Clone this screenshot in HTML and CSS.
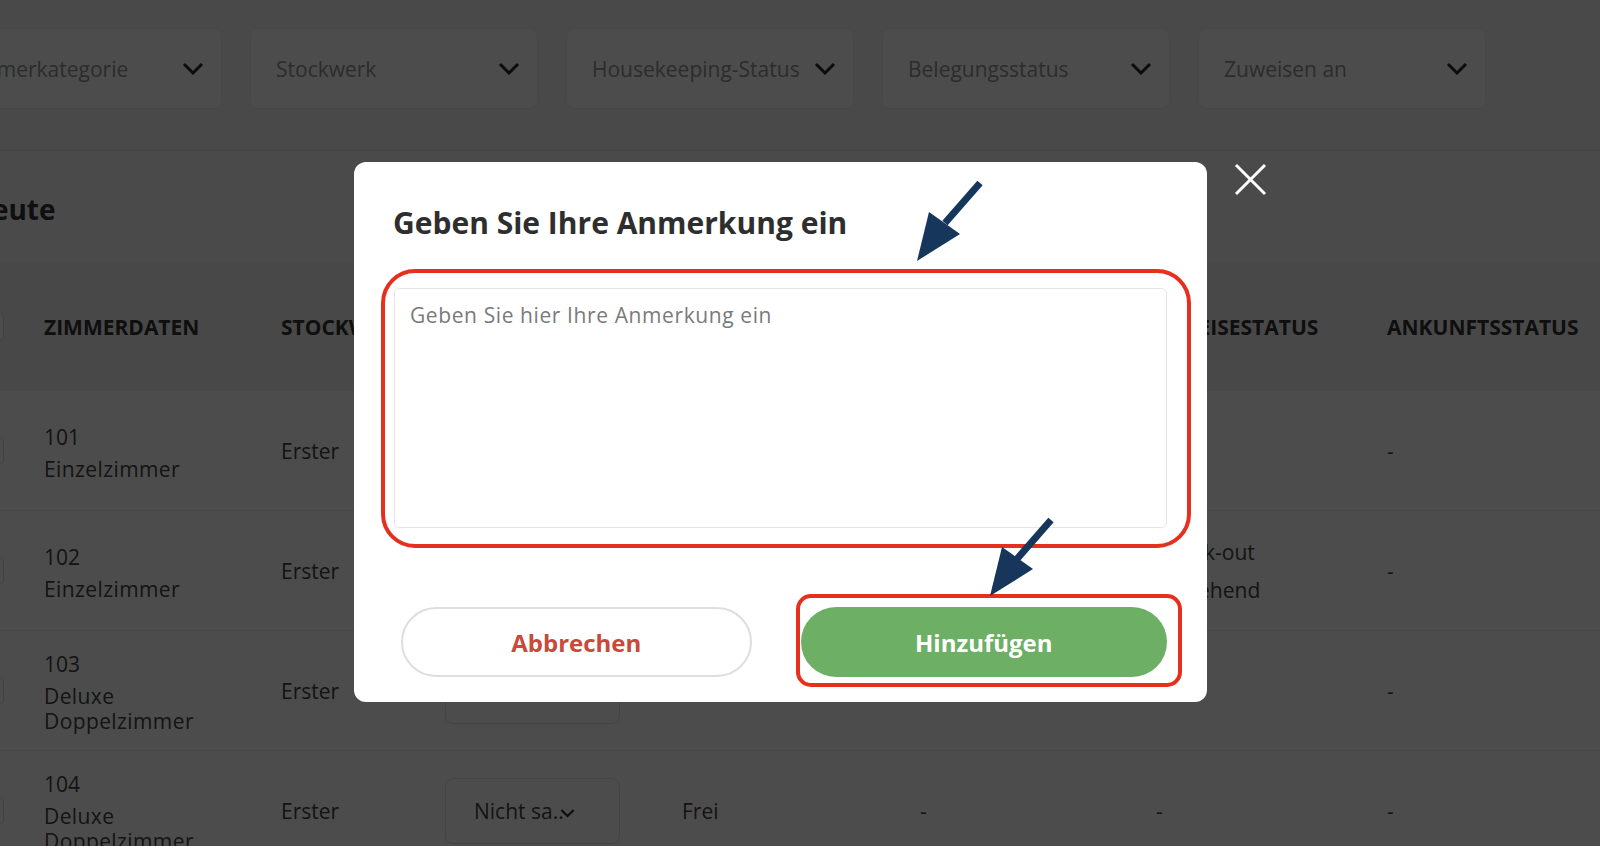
FILE: index.html
```html
<!DOCTYPE html>
<html lang="de">
<head>
<meta charset="utf-8">
<title>Anmerkung hinzufügen</title>
<link rel="stylesheet" href="styles.css">
</head>
<body>
<div class="page">
  <div class="filters">
    <div class="filter"><span class="filter-label">Zimmerkategorie</span><svg class="chev" viewBox="0 0 22 13"><polyline points="2,2 11,11 20,2"/></svg></div>
    <div class="filter"><span class="filter-label">Stockwerk</span><svg class="chev" viewBox="0 0 22 13"><polyline points="2,2 11,11 20,2"/></svg></div>
    <div class="filter"><span class="filter-label">Housekeeping-Status</span><svg class="chev" viewBox="0 0 22 13"><polyline points="2,2 11,11 20,2"/></svg></div>
    <div class="filter"><span class="filter-label">Belegungsstatus</span><svg class="chev" viewBox="0 0 22 13"><polyline points="2,2 11,11 20,2"/></svg></div>
    <div class="filter"><span class="filter-label">Zuweisen an</span><svg class="chev" viewBox="0 0 22 13"><polyline points="2,2 11,11 20,2"/></svg></div>
  </div>

  <div class="section-title"><h2>Zimmer für heute</h2></div>

  <div class="table">
    <div class="row head">
      <div class="cell"><span class="checkbox"></span></div>
      <div class="cell">ZIMMERDATEN</div>
      <div class="cell">STOCKWERK</div>
      <div class="cell">HOUSEKEEPING</div>
      <div class="cell">BELEGUNG</div>
      <div class="cell">ZUGEWIESEN</div>
      <div class="cell">ABREISESTATUS</div>
      <div class="cell">ANKUNFTSSTATUS</div>
    </div>

    <div class="row body">
      <div class="cell"><span class="checkbox"></span></div>
      <div class="cell room"><div class="num">101</div><div class="type">Einzelzimmer</div></div>
      <div class="cell">Erster</div>
      <div class="cell"><div class="select"><span>Sauber</span><svg class="chev small" viewBox="0 0 22 13"><polyline points="2,2 11,11 20,2"/></svg></div></div>
      <div class="cell">Frei</div>
      <div class="cell">-</div>
      <div class="cell">-</div>
      <div class="cell">-</div>
    </div>

    <div class="row body">
      <div class="cell"><span class="checkbox"></span></div>
      <div class="cell room"><div class="num">102</div><div class="type">Einzelzimmer</div></div>
      <div class="cell">Erster</div>
      <div class="cell"><div class="select"><span>Sauber</span><svg class="chev small" viewBox="0 0 22 13"><polyline points="2,2 11,11 20,2"/></svg></div></div>
      <div class="cell">Belegt</div>
      <div class="cell">-</div>
      <div class="cell status">Check-out<br>anstehend</div>
      <div class="cell">-</div>
    </div>

    <div class="row body">
      <div class="cell"><span class="checkbox"></span></div>
      <div class="cell room"><div class="num">103</div><div class="type">Deluxe Doppelzimmer</div></div>
      <div class="cell">Erster</div>
      <div class="cell"><div class="select"><span>Sauber</span><svg class="chev small" viewBox="0 0 22 13"><polyline points="2,2 11,11 20,2"/></svg></div></div>
      <div class="cell">Frei</div>
      <div class="cell">-</div>
      <div class="cell">-</div>
      <div class="cell">-</div>
    </div>

    <div class="row body">
      <div class="cell"><span class="checkbox"></span></div>
      <div class="cell room"><div class="num">104</div><div class="type">Deluxe Doppelzimmer</div></div>
      <div class="cell">Erster</div>
      <div class="cell"><div class="select"><span>Nicht sa..</span><svg class="chev small" viewBox="0 0 22 13"><polyline points="2,2 11,11 20,2"/></svg></div></div>
      <div class="cell">Frei</div>
      <div class="cell">-</div>
      <div class="cell">-</div>
      <div class="cell">-</div>
    </div>
  </div>
</div>

<div class="overlay"></div>

<button class="close" aria-label="Schließen">
  <svg viewBox="0 0 33 33"><line x1="2" y1="2" x2="31" y2="31"/><line x1="31" y1="2" x2="2" y2="31"/></svg>
</button>

<div class="modal">
  <h1 class="modal-title">Geben Sie Ihre Anmerkung ein</h1>
  <textarea class="note" placeholder="Geben Sie hier Ihre Anmerkung ein"></textarea>
  <div class="actions">
    <button class="btn btn-cancel">Abbrechen</button>
    <button class="btn btn-add">Hinzufügen</button>
  </div>
</div>

<svg class="annotations" viewBox="0 0 1600 846">
  <rect class="mark" x="383" y="271" width="806" height="275" rx="32"/>
  <rect class="mark" x="798" y="596" width="382" height="89" rx="13"/>
  <line class="shaft" x1="980" y1="183" x2="945" y2="223"/>
  <polygon class="head" points="917,261 929,212 960,234"/>
  <line class="shaft" x1="1051" y1="520" x2="1017" y2="559"/>
  <polygon class="head" points="990,596 1002,547 1033,569"/>
</svg>
</body>
</html>
```

FILE: styles.css
```css
* { box-sizing: border-box; }

body {
  margin: 0;
  width: 1600px;
  height: 846px;
  overflow: hidden;
  position: relative;
  background: #ffffff;
  font-family: "Open Sans", "Liberation Sans", sans-serif;
  color: #444;
}

.page {
  margin-left: -100px;
  width: 1700px;
}

/* filter bar */
.filters {
  display: flex;
  align-items: flex-start;
  gap: 28px;
  height: 151px;
  padding: 28px 0 0 34px;
  background: #f4f5f8;
  border-bottom: 1px solid #e2e3e6;
}

.filter {
  flex: 0 0 288px;
  height: 81px;
  display: flex;
  align-items: center;
  justify-content: space-between;
  padding: 0 17px 0 25px;
  background: #ffffff;
  border: 1px solid #eceef1;
  border-radius: 8px;
  font-size: 21px;
  color: #959595;
  white-space: nowrap;
}

.filter-label { overflow: hidden; }

.chev {
  flex: 0 0 22px;
  width: 22px;
  height: 13px;
  fill: none;
  stroke: #2a2a2a;
  stroke-width: 3;
}

.chev.small {
  flex: 0 0 15px;
  width: 15px;
  height: 10px;
  margin-left: -4px;
  margin-top: 5px;
}

/* title */
.section-title {
  height: 112px;
  display: flex;
  align-items: center;
  padding-top: 4px;
  background: #f8f9fb;
}

.section-title h2 {
  margin: 0 0 0 -92px;
  font-size: 28px;
  font-weight: 700;
  color: #333;
  white-space: nowrap;
}

/* table */
.row {
  display: grid;
  grid-template-columns: 68px 237px 164px 237px 238px 236px 231px 1fr;
  align-items: center;
  padding-left: 76px;
}

.row.head {
  height: 128px;
  background: #f1f2f4;
  font-size: 21px;
  font-weight: 700;
  color: #333;
  white-space: nowrap;
}

.row.body {
  height: 120px;
  background: #ffffff;
  border-bottom: 1px solid #ececec;
  font-size: 21px;
  color: #444;
}

.checkbox {
  display: block;
  width: 28px;
  height: 28px;
  background: #fff;
  border: 1px solid #d9d9d9;
  border-radius: 5px;
}

.room { padding-top: 4px; }

.room .num {
  line-height: 26px;
  margin-bottom: 7px;
}

.room .type {
  line-height: 25px;
  max-width: 170px;
  letter-spacing: 0.4px;
}

.status { line-height: 38px; }

.select {
  width: 175px;
  height: 66px;
  display: flex;
  align-items: center;
  padding-left: 28px;
  border: 1px solid #e3e3e3;
  border-radius: 8px;
  background: #fff;
  white-space: nowrap;
}

/* overlay and modal */
.overlay {
  position: absolute;
  inset: 0;
  background: rgba(0, 0, 0, 0.7);
}

.close {
  position: absolute;
  left: 1234px;
  top: 163px;
  width: 33px;
  height: 33px;
  padding: 0;
  border: 0;
  background: transparent;
}

.close svg {
  display: block;
  width: 33px;
  height: 33px;
  stroke: #ffffff;
  stroke-width: 3;
}

.modal {
  position: absolute;
  left: 354px;
  top: 162px;
  width: 853px;
  height: 540px;
  display: flex;
  flex-direction: column;
  padding: 41px 40px 25px 40px;
  background: #ffffff;
  border-radius: 12px;
}

.modal-title {
  margin: 0 0 45px -1px;
  font-size: 30px;
  line-height: 40px;
  font-weight: 700;
  color: #2e2e2e;
}

.note {
  display: block;
  width: 773px;
  height: 240px;
  margin: 0;
  padding: 12px 15px;
  resize: none;
  border: 1px solid #e6e6e6;
  border-radius: 5px;
  font-family: "Open Sans", "Liberation Sans", sans-serif;
  font-size: 21px;
  line-height: 29px;
  letter-spacing: 0.6px;
  color: #333;
  background: #fff;
}

.note::placeholder { color: #7a7a7a; }

.actions {
  display: flex;
  gap: 49px;
  margin-top: 79px;
  padding-left: 7px;
}

.btn {
  height: 70px;
  border-radius: 35px;
  font-family: "Open Sans", "Liberation Sans", sans-serif;
  font-size: 24px;
  font-weight: 700;
  padding: 0;
}

.btn-cancel {
  width: 351px;
  background: #ffffff;
  border: 2px solid #dedede;
  color: #c9493a;
}

.btn-add {
  width: 367px;
  background: #6caf65;
  border: 0;
  color: #ffffff;
}

/* annotations */
.annotations {
  position: absolute;
  left: 0;
  top: 0;
  width: 1600px;
  height: 846px;
  pointer-events: none;
}

.mark {
  fill: none;
  stroke: #e6301f;
  stroke-width: 4;
}

.shaft {
  stroke: #16365c;
  stroke-width: 7;
}

.head { fill: #16365c; }
```
